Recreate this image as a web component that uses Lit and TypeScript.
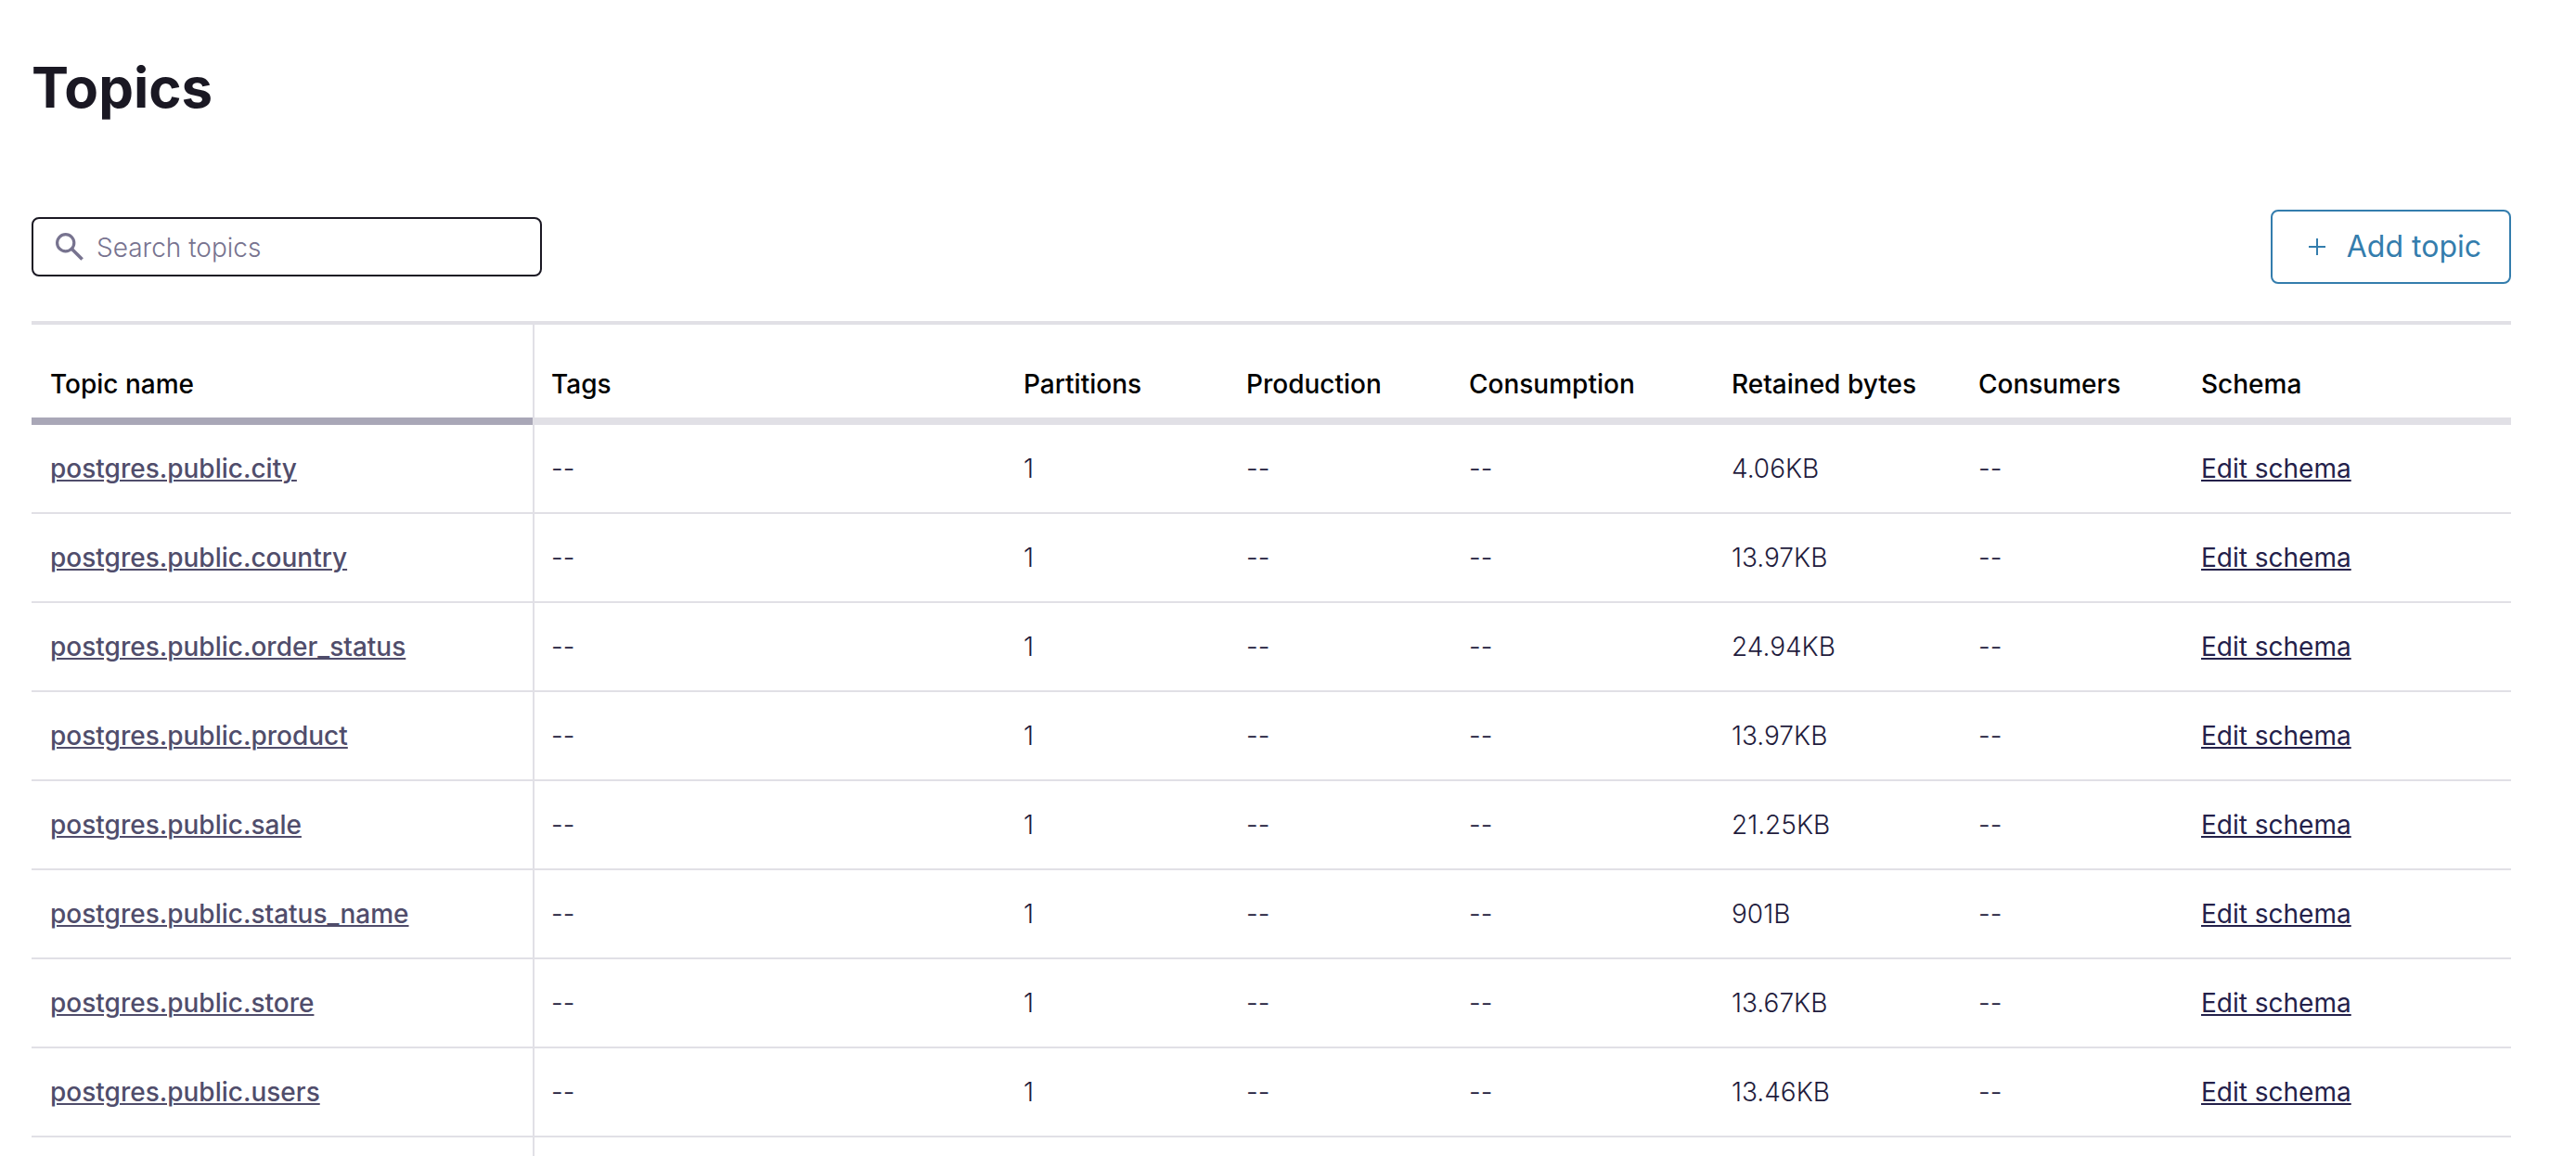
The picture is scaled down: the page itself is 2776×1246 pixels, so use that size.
import { LitElement, html, css } from "lit";
import { customElement, state } from "lit/decorators.js";

interface Topic {
  name: string;
  partitions: number;
  retained: string;
}

const TOPICS: Topic[] = [
  { name: "postgres.public.city", partitions: 1, retained: "4.06KB" },
  { name: "postgres.public.country", partitions: 1, retained: "13.97KB" },
  { name: "postgres.public.order_status", partitions: 1, retained: "24.94KB" },
  { name: "postgres.public.product", partitions: 1, retained: "13.97KB" },
  { name: "postgres.public.sale", partitions: 1, retained: "21.25KB" },
  { name: "postgres.public.status_name", partitions: 1, retained: "901B" },
  { name: "postgres.public.store", partitions: 1, retained: "13.67KB" },
  { name: "postgres.public.users", partitions: 1, retained: "13.46KB" },
];

const EMPTY = "--";

@customElement("topics-table")
class TopicsTable extends LitElement {
  static properties = { topics: { attribute: false } };
  declare topics: Topic[];

  constructor() {
    super();
    this.topics = [];
  }

  static styles = css`
    :host {
      display: flex;
      flex-direction: column;
      flex: 1;
    }
    .table {
      width: 100%;
      table-layout: fixed;
      border-collapse: separate;
      border-spacing: 0;
      border-top: 4px solid #e1e0e6;
    }
    .col-name { width: 540px; }
    .col-std { width: 240px; }
    .col-consumption { width: 283px; }
    .col-retained { width: 266px; }
    .col-schema { width: 354px; }
    .head {
      box-sizing: border-box;
      height: 108px;
      padding: 47px 20px 19px;
      border-bottom: 8px solid #e1e0e6;
      text-align: left;
      vertical-align: top;
      font-weight: 500;
      line-height: 34px;
      color: #000;
      white-space: nowrap;
    }
    .head.sorted { border-bottom-color: #a9a7b7; }
    .cell {
      box-sizing: border-box;
      height: 96px;
      padding: 0 20px;
      border-bottom: 2px solid #e1e0e6;
      font-weight: 300;
      line-height: 34px;
      white-space: nowrap;
    }
    .tags {
      padding-left: 18px;
      border-left: 2px solid #e1e0e6;
    }
    .topic {
      font-weight: 500;
      color: #504d6b;
    }
    .schema {
      font-weight: 400;
      color: #24214a;
    }
    .topic, .schema {
      text-decoration-thickness: 2px;
      text-underline-offset: 2px;
    }
    .rest {
      flex: 1;
      width: 540px;
      min-height: 20px;
      border-right: 2px solid #e1e0e6;
    }
  `;

  render() {
    return html`
      <table class="table" aria-label="Topics">
        <colgroup>
          <col class="col-name" />
          <col />
          <col class="col-std" />
          <col class="col-std" />
          <col class="col-consumption" />
          <col class="col-retained" />
          <col class="col-std" />
          <col class="col-schema" />
        </colgroup>
        <thead>
          <tr>
            <th class="head sorted" scope="col" aria-sort="ascending">Topic name</th>
            <th class="head tags" scope="col">Tags</th>
            <th class="head" scope="col">Partitions</th>
            <th class="head" scope="col">Production</th>
            <th class="head" scope="col">Consumption</th>
            <th class="head" scope="col">Retained bytes</th>
            <th class="head" scope="col">Consumers</th>
            <th class="head" scope="col">Schema</th>
          </tr>
        </thead>
        <tbody>
          ${this.topics.map(
            (t) => html`
              <tr>
                <td class="cell"><a class="topic" href="#${t.name}">${t.name}</a></td>
                <td class="cell tags">${EMPTY}</td>
                <td class="cell">${t.partitions}</td>
                <td class="cell">${EMPTY}</td>
                <td class="cell">${EMPTY}</td>
                <td class="cell">${t.retained}</td>
                <td class="cell">${EMPTY}</td>
                <td class="cell"><a class="schema" href="#${t.name}/schema">Edit schema</a></td>
              </tr>
            `
          )}
        </tbody>
      </table>
      <div class="rest"></div>
    `;
  }
}

@customElement("app-root")
class AppRoot extends LitElement {
  @state() private query = "";

  static styles = css`
    :host {
      display: block;
      font-family: Inter, "Liberation Sans", sans-serif;
      font-size: 28px;
      color: #1f1c3d;
      background: #fff;
    }
    .page {
      box-sizing: border-box;
      display: flex;
      flex-direction: column;
      min-height: 100vh;
      padding: 54px 70px 0 34px;
    }
    .title {
      margin: 0 0 92px;
      font-size: 60px;
      line-height: 80px;
      font-weight: 700;
      color: #1a1823;
    }
    .toolbar {
      display: flex;
      align-items: center;
      justify-content: space-between;
      margin-bottom: 40px;
    }
    .search {
      box-sizing: border-box;
      display: flex;
      align-items: center;
      gap: 14px;
      width: 550px;
      height: 64px;
      padding: 0 24px;
      border: 2px solid #1a1823;
      border-radius: 8px;
    }
    .search-icon {
      flex: none;
      width: 30px;
      height: 30px;
      fill: none;
      stroke: #77738f;
    }
    .search-input {
      flex: 1;
      min-width: 0;
      padding: 2px 0 0;
      border: 0;
      outline: 0;
      background: none;
      font: inherit;
      font-weight: 300;
      line-height: 34px;
      color: #1a1823;
    }
    .search-input::placeholder {
      color: #77738f;
      opacity: 1;
    }
    .add {
      box-sizing: border-box;
      display: flex;
      align-items: center;
      gap: 22px;
      height: 80px;
      padding: 0 30px 0 38px;
      border: 2px solid #347dad;
      border-radius: 8px;
      background: #fff;
      font: inherit;
      font-size: 32px;
      line-height: 40px;
      color: #347dad;
    }
    .plus {
      width: 20px;
      height: 20px;
      stroke: currentColor;
      stroke-width: 2;
      fill: none;
    }
  `;

  private onSearch(e: InputEvent) {
    this.query = (e.target as HTMLInputElement).value;
  }

  render() {
    const shown = TOPICS.filter((t) => t.name.includes(this.query.trim()));
    return html`
      <main class="page">
        <h1 class="title">Topics</h1>
        <div class="toolbar">
          <label class="search">
            <svg class="search-icon" viewBox="0 0 30 30" aria-hidden="true">
              <circle cx="10.7" cy="10.7" r="9.1" stroke-width="3.2" />
              <path d="M16.8 16.8L28.6 28.6" stroke-width="3.6" />
            </svg>
            <input
              class="search-input"
              type="text"
              placeholder="Search topics"
              aria-label="Search topics"
              .value=${this.query}
              @input=${this.onSearch}
            />
          </label>
          <button class="add" type="button">
            <svg class="plus" viewBox="0 0 20 20" aria-hidden="true">
              <path d="M10 1v18M1 10h18" />
            </svg>
            Add topic
          </button>
        </div>
        <topics-table .topics=${shown}></topics-table>
      </main>
    `;
  }
}
